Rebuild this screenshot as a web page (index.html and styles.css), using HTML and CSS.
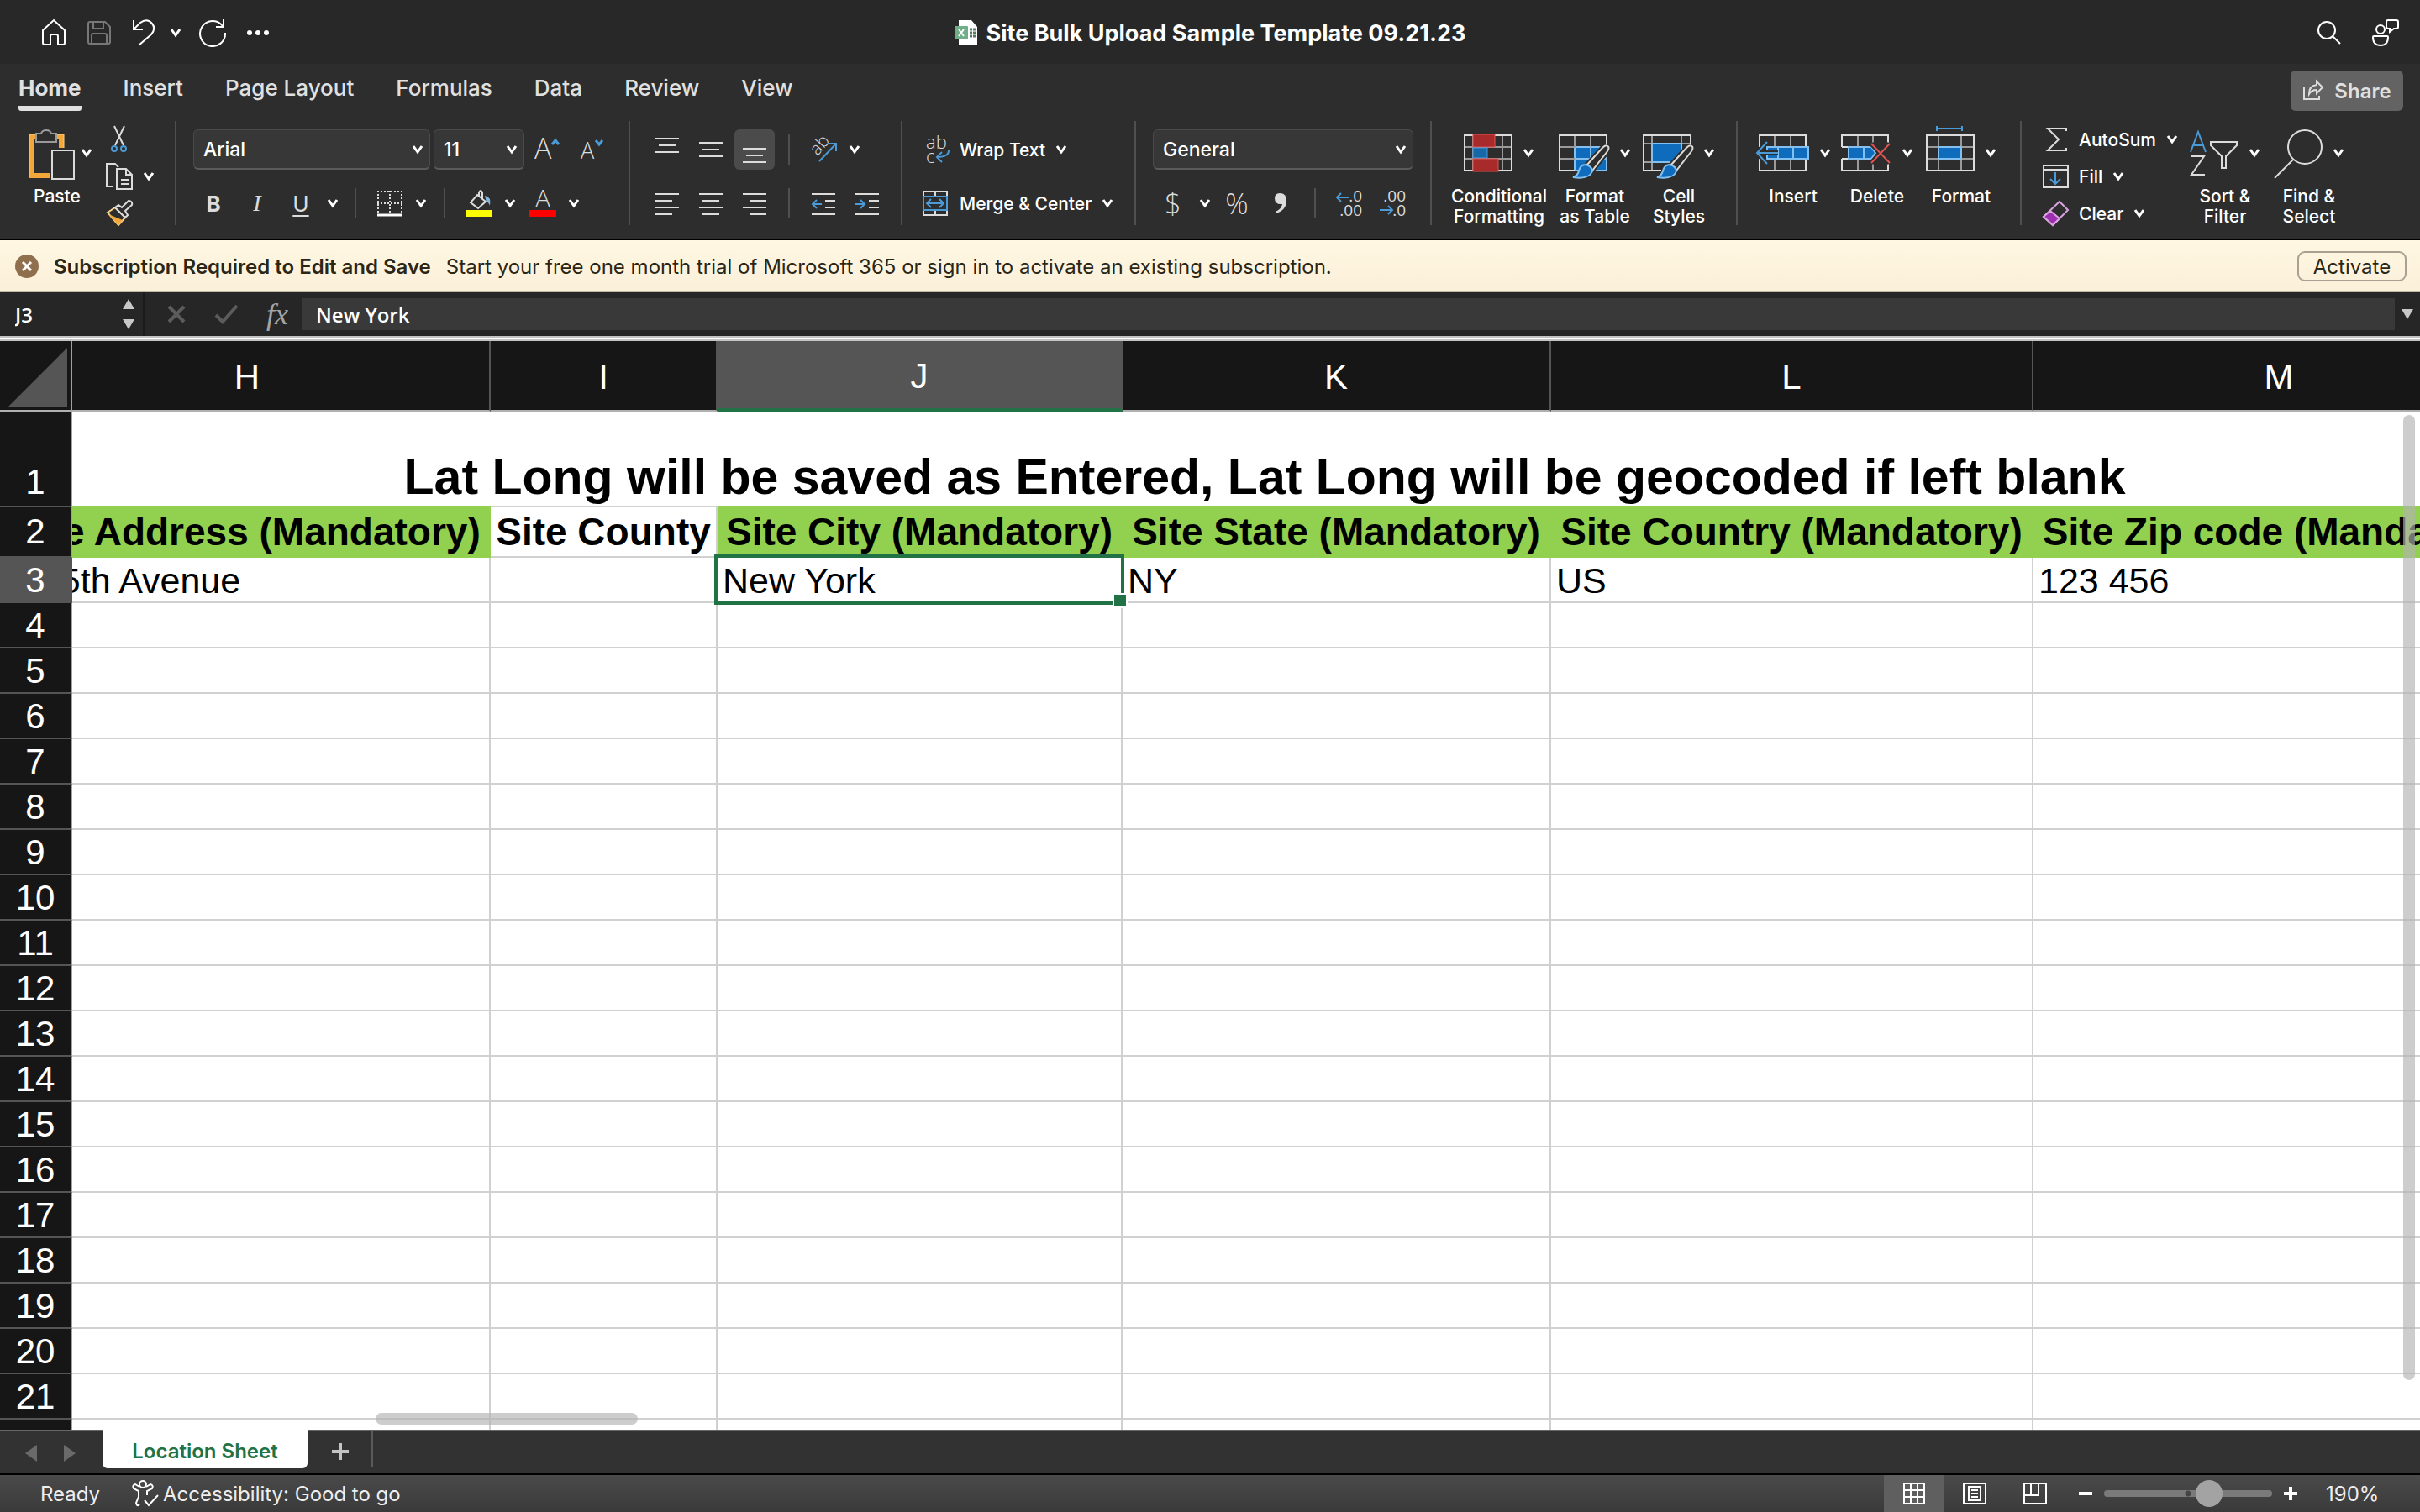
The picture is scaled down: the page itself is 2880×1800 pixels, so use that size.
FILE: index.html
```html
<!DOCTYPE html>
<html lang="en">
<head>
    <meta charset="UTF-8">
    <meta name="viewport" content="width=device-width, initial-scale=1.0">
    <title>Site Bulk Upload Sample Template 09.21.23</title>
    <link rel="stylesheet" href="styles.css">
</head>
<body>

    <!-- Shared symbols -->
    <svg class="symbols" aria-hidden="true">
        <symbol id="chevron" viewBox="0 0 14 12">
            <path d="M2 2 L7 9 L12 2" fill="none" stroke="#fff" stroke-width="3"/>
        </symbol>
        <symbol id="brush" viewBox="0 0 46 44">
            <path d="M43 3 Q46 4 43 9 L25 32 L18 26 L37 5 Q41 1 43 3 Z" fill="#2d2d2d" stroke="#2d2d2d" stroke-width="6"/>
            <path d="M43 3 Q46 4 43 9 L25 32 L18 26 L37 5 Q41 1 43 3 Z" fill="#2d2d2d" stroke="#dcdad6" stroke-width="2"/>
            <path d="M17 25 Q25 27 25 33 Q21 43 2 40 Q8 38 9 32 Q11 25 17 25 Z" fill="#0f6cbd" stroke="#83c0f0" stroke-width="2"/>
        </symbol>
    </svg>

    <!-- Title bar -->
    <header class="titlebar">
        <div class="quick">
            <button aria-label="Home"><svg width="32" height="32" viewBox="0 0 32 32"><path d="M3 13 L16 1 L29 13 V28 Q29 30 27 30 H21 V20 Q21 18 19 18 H14 Q12 18 12 20 V30 H5 Q3 30 3 28 Z"/></svg></button>
            <button aria-label="Save" class="dim"><svg width="32" height="32" viewBox="0 0 32 32"><path d="M5 3 H23 L29 9 V27 Q29 29 27 29 H5 Q3 29 3 27 V5 Q3 3 5 3 Z M9 3 V11 H21 V3 M7 29 V19 Q7 17 9 17 H23 Q25 17 25 19 V29"/></svg></button>
            <button aria-label="Undo"><svg width="32" height="32" viewBox="0 0 32 32"><path d="M3 1 V12 H14 M3 12 L11 4 Q19 -2 25 5 Q30 11 24 18 L9 31"/></svg></button>
            <button aria-label="Undo list" class="drop"><svg width="14" height="12"><use href="#chevron"/></svg></button>
            <button aria-label="Redo"><svg width="34" height="34" viewBox="0 0 34 34"><path d="M30 1 V10 H21 M29 9 A15 15 0 1 0 32 17"/></svg></button>
            <button aria-label="More"><svg width="32" height="32" viewBox="0 0 32 32"><g fill="#fff" stroke="none"><circle cx="5" cy="16" r="3"/><circle cx="15" cy="16" r="3"/><circle cx="25" cy="16" r="3"/></g></svg></button>
        </div>
        <h1>
            <svg width="28" height="30" viewBox="0 0 28 30"><path d="M5 0 H20 L27 8 V30 H5 Z" fill="#fff"/><path d="M18 11 H25 M18 15 H25 M18 19 H25" stroke="#5a7a66" stroke-width="3" stroke-dasharray="3 1"/><rect y="7" width="16" height="16" rx="1" fill="#6fae86"/><path d="M5 11 L11 19 M11 11 L5 19" stroke="#fff" stroke-width="2"/></svg>
            Site Bulk Upload Sample Template 09.21.23
        </h1>
        <div class="account">
            <button aria-label="Search"><svg width="32" height="32" viewBox="0 0 32 32"><circle cx="13" cy="13" r="10"/><path d="M20 20 L29 29"/></svg></button>
            <button aria-label="Collaborate"><svg width="34" height="34" viewBox="0 0 34 34"><circle cx="11" cy="13" r="5"/><path d="M2 22 Q2 21 3 21 H19 Q20 21 20 22 Q20 32 11 32 Q2 32 2 22 Z M20 2 H30 Q32 2 32 4 V10 Q32 12 30 12 H27 L22 16 V12 H20 Q18 12 18 10 V4 Q18 2 20 2 Z"/></svg></button>
        </div>
    </header>

    <!-- Ribbon tabs -->
    <nav class="tabs">
        <a href="#" class="active">Home</a>
        <a href="#">Insert</a>
        <a href="#">Page Layout</a>
        <a href="#">Formulas</a>
        <a href="#">Data</a>
        <a href="#">Review</a>
        <a href="#">View</a>
        <button class="share">
            <svg width="26" height="26" viewBox="0 0 26 26"><path d="M2 8 V23 H20 V19 M8 17 Q8 7 17 6 V2 L24 9 L17 16 V12 Q11 12 8 17 Z"/></svg>
            Share
        </button>
    </nav>

    <!-- Ribbon -->
    <section class="ribbon">
        <div class="group clipboard">
            <button class="big paste">
                <span class="pic">
                    <svg width="56" height="64" viewBox="0 0 56 64"><path d="M8 12 H3 V59 H25 M33 12 H39 V26" stroke="#f3a73b" stroke-width="6"/><path d="M1 61 V10 H10 M34 10 H42 V26" stroke="#fbd38b" stroke-width="1"/><path d="M9 19 V9 H15 Q16 5 21 5 Q26 5 27 9 H33 V19 Z" fill="#2d2d2d" stroke="#9a9a9a"/><rect x="28" y="29" width="26" height="34" fill="#2d2d2d" stroke="#dadada"/></svg>
                    <svg width="14" height="12"><use href="#chevron"/></svg>
                </span>
                Paste
            </button>
            <div class="stack">
                <button aria-label="Cut"><svg width="32" height="32" viewBox="0 0 32 32"><path d="M10 0 L21 23 M22 0 L11 23"/><g stroke="#4a9bd8"><circle cx="10" cy="27" r="3"/><circle cx="21" cy="27" r="3"/></g></svg></button>
                <button aria-label="Copy"><svg width="32" height="32" viewBox="0 0 32 32"><path d="M9 28 H1 V1 H11 L15 5 M13 7 H24 L31 14 V31 H13 Z M24 7 V14 H31 M18 20 H27 M18 25 H27"/></svg><svg width="14" height="12"><use href="#chevron"/></svg></button>
                <button aria-label="Format painter"><svg width="32" height="32" viewBox="0 0 32 32"><path d="M2 15 L11 9 L23 21 L15 30 Z" fill="#2d2d2d" stroke="#fbd38b"/><path d="M3 17 L20 24 L15 30 Z" fill="#f3a73b" stroke="none"/><path d="M11 9 L15 6 L19 9 L27 1 Q32 1 31 6 L23 13 L26 18 L23 21 Z" fill="#2d2d2d"/></svg></button>
            </div>
        </div>

        <div class="group font">
            <div class="row">
                <label class="select font-name"><select aria-label="Font"><option>Arial</option></select><svg width="14" height="12"><use href="#chevron"/></svg></label>
                <label class="select font-size"><select aria-label="Font size"><option>11</option></select><svg width="14" height="12"><use href="#chevron"/></svg></label>
                <button class="tool" aria-label="Increase font size"><svg width="34" height="32" viewBox="0 0 34 32"><text x="1" y="27" font-size="34">A</text><path d="M22 10 L26 5 L30 10" stroke="#4a9bd8" stroke-width="3"/></svg></button>
                <button class="tool" aria-label="Decrease font size"><svg width="30" height="32" viewBox="0 0 30 32"><text x="2" y="27" font-size="27">A</text><path d="M20 5 L24 10 L28 5" stroke="#4a9bd8" stroke-width="3"/></svg></button>
            </div>
            <div class="row">
                <button class="tool bold">B</button>
                <button class="tool italic">I</button>
                <button class="tool underline">U</button>
                <button class="drop" aria-label="Underline style"><svg width="14" height="12"><use href="#chevron"/></svg></button>
                <i class="sep"></i>
                <button class="tool-drop" aria-label="Borders"><svg width="32" height="32" viewBox="0 0 32 32"><path d="M1 2 H31 M1 16 H31 M2 1 V28 M16 1 V28 M30 1 V28" stroke-dasharray="2 2"/><path d="M1 30 H31" stroke="#fff" stroke-width="3"/></svg><svg width="14" height="12"><use href="#chevron"/></svg></button>
                <i class="sep"></i>
                <button class="tool-drop" aria-label="Fill color"><svg width="32" height="34" viewBox="0 0 32 34"><path d="M16 9 V4 Q18 0 20 4 V12 M14 7 L24 15 L15 23 L6 16 Z"/><path d="M23 8 Q31 9 29 20 Q27 15 25 16 Z" fill="#83b8e0" stroke="none"/><rect y="25" width="32" height="8" fill="#ff0" stroke="none"/></svg><svg width="14" height="12"><use href="#chevron"/></svg></button>
                <button class="tool-drop" aria-label="Font color"><svg width="32" height="34" viewBox="0 0 32 34"><text x="7" y="22" font-size="30">A</text><rect y="25" width="32" height="8" fill="#f00" stroke="none"/></svg><svg width="14" height="12"><use href="#chevron"/></svg></button>
            </div>
        </div>

        <div class="group align">
            <div class="row">
                <button class="tool" aria-label="Top align"><svg width="28" height="32" viewBox="0 0 28 32"><path d="M0 3 H28 M4 11 H24 M0 19 H28"/></svg></button>
                <button class="tool" aria-label="Middle align"><svg width="28" height="32" viewBox="0 0 28 32"><path d="M0 8 H28 M4 16 H24 M0 24 H28"/></svg></button>
                <button class="tool on" aria-label="Bottom align"><svg width="28" height="32" viewBox="0 0 28 32"><path d="M0 15 H28 M4 23 H24 M0 31 H28"/></svg></button>
                <i class="sep"></i>
                <button class="tool-drop" aria-label="Orientation"><svg width="32" height="32" viewBox="0 0 32 32"><text font-size="21" transform="translate(9 24) rotate(-50)">ab</text><path d="M11 30 L31 9 M21 9 H31 V18" stroke="#4a9bd8"/></svg><svg width="14" height="12"><use href="#chevron"/></svg></button>
            </div>
            <div class="row">
                <button class="tool" aria-label="Align left"><svg width="28" height="32" viewBox="0 0 28 32"><path d="M0 5 H28 M0 13 H20 M0 21 H28 M0 29 H20"/></svg></button>
                <button class="tool" aria-label="Center"><svg width="28" height="32" viewBox="0 0 28 32"><path d="M0 5 H28 M4 13 H24 M0 21 H28 M4 29 H24"/></svg></button>
                <button class="tool" aria-label="Align right"><svg width="28" height="32" viewBox="0 0 28 32"><path d="M0 5 H28 M8 13 H28 M0 21 H28 M8 29 H28"/></svg></button>
                <i class="sep"></i>
                <button class="narrow" aria-label="Decrease indent"><svg width="28" height="32" viewBox="0 0 28 32"><path d="M0 5 H28 M16 13 H28 M16 21 H28 M0 29 H28"/><path d="M12 17 H1 M6 12 L1 17 L6 22" stroke="#4a9bd8"/></svg></button>
                <button class="narrow" aria-label="Increase indent"><svg width="28" height="32" viewBox="0 0 28 32"><path d="M0 5 H28 M16 13 H28 M16 21 H28 M0 29 H28"/><path d="M0 17 H11 M6 12 L11 17 L6 22" stroke="#4a9bd8"/></svg></button>
            </div>
        </div>

        <div class="group wrap">
            <div class="row">
                <button class="labelled"><svg width="32" height="34" viewBox="0 0 32 34"><text x="4" y="16" font-size="22">ab</text><text x="4" y="33" font-size="22">c</text><path d="M31 17 Q32 26 17 26 M23 20 L17 26 L23 32" stroke="#4a9bd8"/></svg>Wrap Text<svg width="14" height="12"><use href="#chevron"/></svg></button>
            </div>
            <div class="row">
                <button class="labelled"><svg width="32" height="32" viewBox="0 0 32 32"><path d="M1 2 H29 V30 H1 Z M15 2 V8 M15 24 V30"/><path d="M1 8 H29 V24 H1 Z M5 16 H25 M10 11 L5 16 L10 21 M20 11 L25 16 L20 21" stroke="#4a9bd8"/></svg>Merge &amp; Center<svg width="14" height="12"><use href="#chevron"/></svg></button>
            </div>
        </div>

        <div class="group number">
            <div class="row">
                <label class="select number-format"><select aria-label="Number format"><option>General</option></select><svg width="14" height="12"><use href="#chevron"/></svg></label>
            </div>
            <div class="row">
                <button class="tool symbol">$</button>
                <button class="drop" aria-label="Currency list"><svg width="14" height="12"><use href="#chevron"/></svg></button>
                <button class="tool symbol">%</button>
                <button class="tool" aria-label="Comma style"><svg width="20" height="28" viewBox="0 0 20 28"><path d="M9 2 Q17 2 17 11 Q17 22 5 26 L4 24 Q11 21 12 15 Q3 16 3 8 Q3 2 9 2 Z" fill="#dcdcdc" stroke="none"/></svg></button>
                <i class="sep"></i>
                <button class="narrow decimals" aria-label="Increase decimal"><svg width="32" height="34" viewBox="0 0 32 34"><text x="31" y="15" font-size="19" text-anchor="end">.0</text><text x="31" y="32" font-size="19" text-anchor="end">.00</text><path d="M15 10 H1 M6 5 L1 10 L6 15" stroke="#4a9bd8"/></svg></button>
                <button class="narrow decimals" aria-label="Decrease decimal"><svg width="32" height="34" viewBox="0 0 32 34"><text x="31" y="15" font-size="19" text-anchor="end">.00</text><text x="31" y="32" font-size="19" text-anchor="end">.0</text><path d="M0 25 H15 M10 20 L15 25 L10 30" stroke="#4a9bd8"/></svg></button>
            </div>
        </div>

        <div class="group styles">
            <button class="big">
                <span class="pic">
                    <svg width="58" height="64" viewBox="0 0 58 64"><path d="M11 11 V53 M46 11 V53 M1 25 H57 M1 39 H57" stroke="#9a9a9a"/><rect x="1" y="11" width="56" height="42"/><g stroke-width="1"><rect x="11" y="10" width="26" height="15" fill="#a82a2a" stroke="#e05555"/><rect x="11" y="26" width="17" height="12" fill="#1668a8" stroke="#4a9bd8"/><rect x="11" y="39" width="30" height="15" fill="#a82a2a" stroke="#e05555"/></g></svg>
                    <svg width="14" height="12"><use href="#chevron"/></svg>
                </span>
                Conditional<br>Formatting
            </button>
            <button class="big">
                <span class="pic">
                    <svg width="60" height="64" viewBox="0 0 60 64"><path d="M19 25 H57 V53 H19 Z" fill="#0f6cbd" stroke="#83c0f0"/><path d="M1 25 H19 M1 39 H19 M19 11 V25 M38 11 V25" stroke="#9a9a9a"/><path d="M19 39 H57 M38 25 V53" stroke="#83c0f0"/><path d="M57 25 V11 H1 V53 H19"/><use href="#brush" x="15" y="21" width="46" height="44"/></svg>
                    <svg width="14" height="12"><use href="#chevron"/></svg>
                </span>
                Format<br>as Table
            </button>
            <button class="big">
                <span class="pic">
                    <svg width="60" height="64" viewBox="0 0 60 64"><path d="M11 11 V53 M46 11 V42 M1 21 H57 M1 43 H46" stroke="#9a9a9a"/><path d="M57 22 V11 H1 V53 H22"/><rect x="11" y="21" width="35" height="22" fill="#0f6cbd" stroke="#83c0f0"/><use href="#brush" x="15" y="21" width="46" height="44"/></svg>
                    <svg width="14" height="12"><use href="#chevron"/></svg>
                </span>
                Cell<br>Styles
            </button>
        </div>

        <div class="group cells">
            <button class="big">
                <span class="pic">
                    <svg width="64" height="64" viewBox="0 0 64 64"><path d="M23 11 V53 M42 11 V53" stroke="#9a9a9a"/><path d="M5 25 V11 H60 V25 M5 39 V53 H60 V39"/><rect x="14" y="25" width="49" height="14" fill="#0f6cbd" stroke="#83c0f0"/><path d="M27 25 V39 M45 25 V39" stroke="#83c0f0"/><path d="M27 32 H2 M14 19 L2 32 L14 45" stroke="#2d2d2d" stroke-width="6"/><path d="M27 32 H2 M14 19 L2 32 L14 45" stroke="#4a9bd8"/></svg>
                    <svg width="14" height="12"><use href="#chevron"/></svg>
                </span>
                Insert
            </button>
            <button class="big">
                <span class="pic">
                    <svg width="60" height="64" viewBox="0 0 60 64"><path d="M20 11 V25 M38 11 V25 M20 39 V53 M38 39 V53" stroke="#9a9a9a"/><path d="M1 25 V11 H56 V20 M1 25 H9 M1 39 H9 M1 39 V53 H56 V44"/><path d="M9 25 H36 L41 32 L36 39 H9 Z M27 25 V39" fill="#0f6cbd" stroke="#83c0f0"/><path d="M36 21 L58 44 M58 21 L36 44" stroke="#2d2d2d" stroke-width="6"/><path d="M36 21 L58 44 M58 21 L36 44" stroke="#e05252"/></svg>
                    <svg width="14" height="12"><use href="#chevron"/></svg>
                </span>
                Delete
            </button>
            <button class="big">
                <span class="pic">
                    <svg width="58" height="64" viewBox="0 0 58 64"><path d="M12 3 H44 M13 0 V6 M43 0 V6" stroke="#4a9bd8"/><path d="M15 11 V53 M42 11 V53 M1 25 H57 M1 39 H57" stroke="#9a9a9a"/><rect x="1" y="11" width="56" height="42"/><rect x="15" y="25" width="27" height="14" fill="#0f6cbd" stroke="#83c0f0"/></svg>
                    <svg width="14" height="12"><use href="#chevron"/></svg>
                </span>
                Format
            </button>
        </div>

        <div class="group editing">
            <div class="stack">
                <button><svg width="32" height="32" viewBox="0 0 32 32"><path d="M29 6 V3 H7 L20 16 L7 29 H29 V26"/></svg>AutoSum<svg width="14" height="12"><use href="#chevron"/></svg></button>
                <button><svg width="32" height="32" viewBox="0 0 32 32"><path d="M2 3 H31 V29 H2 Z M2 8 H31"/><path d="M16 11 V25 M10 19 L16 25 L22 19" stroke="#4a9bd8"/></svg>Fill<svg width="14" height="12"><use href="#chevron"/></svg></button>
                <button><svg width="32" height="32" viewBox="0 0 32 32"><path d="M21 2 L31 12 L13 30 L2 20 Z" stroke="#d9a3e0"/><path d="M10 13 L21 22 L13 30 L2 20 Z" fill="#9b2fae" stroke="#d9a3e0"/></svg>Clear<svg width="14" height="12"><use href="#chevron"/></svg></button>
            </div>
            <button class="big">
                <span class="pic">
                    <svg width="58" height="64" viewBox="0 0 58 64"><path d="M1 31 L10 7 L19 31 M4 23 H16" stroke="#4a9bd8"/><path d="M2 36 H17 L2 58 H18 M25 19 H56 V23 L43 36 V50 H38 V36 L25 23 Z"/></svg>
                    <svg width="14" height="12"><use href="#chevron"/></svg>
                </span>
                Sort &amp;<br>Filter
            </button>
            <button class="big">
                <span class="pic">
                    <svg width="58" height="64" viewBox="0 0 58 64"><circle cx="37" cy="25" r="20"/><path d="M23 40 L1 62"/></svg>
                    <svg width="14" height="12"><use href="#chevron"/></svg>
                </span>
                Find &amp;<br>Select
            </button>
        </div>
    </section>

    <!-- Subscription banner -->
    <section class="banner">
        <svg width="28" height="28" viewBox="0 0 28 28"><circle cx="14" cy="14" r="14" fill="#8f6f4d"/><path d="M9 9 L19 19 M19 9 L9 19" stroke="#fff" stroke-width="3"/></svg>
        <strong>Subscription Required to Edit and Save</strong>
        <span>Start your free one month trial of Microsoft 365 or sign in to activate an existing subscription.</span>
        <button>Activate</button>
    </section>

    <!-- Formula bar -->
    <section class="formula">
        <div class="namebox">
            <input type="text" value="J3" aria-label="Name box">
            <svg width="14" height="38" viewBox="0 0 14 38"><path d="M7 1 L14 13 H0 Z M0 25 H14 L7 37 Z" fill="#c8c8c8"/></svg>
        </div>
        <button aria-label="Cancel"><svg width="24" height="24" viewBox="0 0 24 24"><path d="M3 3 L21 21 M21 3 L3 21" stroke="#5c5c5c" stroke-width="4"/></svg></button>
        <button aria-label="Enter"><svg width="30" height="24" viewBox="0 0 30 24"><path d="M2 13 L10 21 L27 2" stroke="#5c5c5c" stroke-width="4"/></svg></button>
        <button class="fx">fx</button>
        <input type="text" class="entry" value="New York" aria-label="Formula">
        <button class="expand" aria-label="Expand formula bar"><svg width="14" height="12" viewBox="0 0 14 12"><path d="M0 0 H14 L7 12 Z" fill="#c8c8c8"/></svg></button>
    </section>

    <!-- Sheet -->
    <main class="sheet">
        <table>
            <colgroup>
                <col class="col-num"><col class="col-h"><col class="col-i"><col class="col-j"><col class="col-k"><col class="col-l"><col class="col-m">
            </colgroup>
            <thead>
                <tr>
                    <th class="corner"><svg width="70" height="70" viewBox="0 0 70 70"><path d="M70 0 V70 H0 Z" fill="#555"/></svg></th>
                    <th>H</th>
                    <th>I</th>
                    <th class="selected">J</th>
                    <th>K</th>
                    <th>L</th>
                    <th>M</th>
                </tr>
            </thead>
            <tbody id="rows">
                <tr class="note">
                    <th>1</th>
                    <td colspan="6">Lat Long will be saved as Entered, Lat Long will be geocoded if left blank</td>
                </tr>
                <tr class="fields">
                    <th>2</th>
                    <td class="mandatory">Site Address (Mandatory)</td>
                    <td>Site County</td>
                    <td class="mandatory">Site City (Mandatory)</td>
                    <td class="mandatory">Site State (Mandatory)</td>
                    <td class="mandatory">Site Country (Mandatory)</td>
                    <td class="mandatory">Site Zip code (Mandatory)</td>
                </tr>
                <tr>
                    <th class="selected">3</th>
                    <td>12 5th Avenue</td>
                    <td></td>
                    <td class="cursor">New York</td>
                    <td>NY</td>
                    <td>US</td>
                    <td>123 456</td>
                </tr>
                <!-- Empty rows are added below -->
            </tbody>
        </table>
        <div class="scroll-y"></div>
        <div class="scroll-x"></div>
    </main>

    <!-- Sheet tabs -->
    <footer class="sheet-tabs">
        <button aria-label="Previous sheet"><svg width="14" height="20" viewBox="0 0 14 20"><path d="M14 0 V20 L0 10 Z" fill="#6a6a6a"/></svg></button>
        <button aria-label="Next sheet"><svg width="14" height="20" viewBox="0 0 14 20"><path d="M0 0 V20 L14 10 Z" fill="#6a6a6a"/></svg></button>
        <a href="#" class="sheet-tab">Location Sheet</a>
        <button class="add" aria-label="New sheet"><svg width="20" height="20" viewBox="0 0 20 20"><path d="M10 0 V20 M0 10 H20" stroke="#c4c4c4" stroke-width="4"/></svg></button>
    </footer>

    <!-- Status bar -->
    <footer class="status">
        <span class="ready">Ready</span>
        <button class="access">
            <svg width="34" height="32" viewBox="0 0 34 32"><circle cx="14" cy="5" r="4"/><path d="M10 8 L5 5 Q1 6 3 10 L9 13 V20 L6 27 Q7 32 10 29 M18 8 L23 5 Q27 6 25 10 L19 13 V18 M16 24 L21 30 L32 18"/></svg>
            Accessibility: Good to go
        </button>
        <div class="views">
            <button class="on" aria-label="Normal view"><svg width="28" height="28" viewBox="0 0 28 28"><path d="M2 2 H26 V26 H2 Z M10 2 V26 M18 2 V26 M2 10 H26 M2 18 H26"/></svg></button>
            <button aria-label="Page layout view"><svg width="28" height="28" viewBox="0 0 28 28"><path d="M1 2 H27 V26 H1 Z M7 6 H21 V22 H7 Z M10 10 H18 M10 14 H18 M10 18 H18"/></svg></button>
            <button aria-label="Page break view"><svg width="28" height="28" viewBox="0 0 28 28"><path d="M1 2 H27 V26 H1 Z M1 16 H18 V2 M9 2 V16"/></svg></button>
        </div>
        <div class="zoom">
            <button aria-label="Zoom out"><svg width="16" height="16" viewBox="0 0 16 16"><path d="M0 8 H16" stroke-width="4"/></svg></button>
            <input type="range" min="0" max="100" value="65" aria-label="Zoom">
            <button aria-label="Zoom in"><svg width="16" height="16" viewBox="0 0 16 16"><path d="M0 8 H16 M8 0 V16" stroke-width="4"/></svg></button>
            <span>190%</span>
        </div>
    </footer>

    <script>
        const rows = document.getElementById("rows");

        // Fill the rest of the sheet with empty rows
        for (let n = 4; n <= 22; n++) {
            const row = document.createElement("tr");
            row.innerHTML = `<th>${n}</th>` + "<td></td>".repeat(6);
            rows.appendChild(row);
        }
    </script>
</body>
</html>
```
FILE: styles.css
```css
* {
    box-sizing: border-box;
}

body {
    display: flex;
    flex-direction: column;
    height: 100vh;
    margin: 0;
    overflow: hidden;
    background: #2d2d2d;
    color: #fff;
    font-family: Inter, "Liberation Sans", sans-serif;
    font-size: 21px;
}

button {
    display: flex;
    align-items: center;
    justify-content: center;
    padding: 0;
    border: none;
    background: none;
    color: inherit;
    font: inherit;
    white-space: nowrap;
    cursor: pointer;
}

a {
    color: inherit;
    text-decoration: none;
}

svg {
    flex: none;
    overflow: visible;
    fill: none;
    stroke: #dcdcdc;
    stroke-width: 2;
}

svg text {
    fill: #dcdcdc;
    stroke: none;
    font-family: "Open Sans", sans-serif;
    font-weight: 300;
}

svg path[fill="#fff"],
svg path[fill="#c8c8c8"],
svg path[fill="#6a6a6a"],
svg path[fill="#555"],
svg circle[fill="#8f6f4d"],
svg rect[fill="#6fae86"] {
    stroke: none;
}

.symbols {
    display: none;
}

/* Title bar */
.titlebar {
    display: grid;
    grid-template-columns: 1fr auto 1fr;
    align-items: center;
    height: 76px;
    padding: 2px 24px 0;
    background: #282828;
}

.titlebar svg {
    stroke: #fff;
}

.titlebar h1 {
    display: flex;
    align-items: center;
    gap: 10px;
    margin: 0;
    font-size: 27px;
    font-weight: 700;
}

.quick {
    display: flex;
    align-items: center;
    gap: 22px;
    padding-left: 24px;
}

.quick .dim svg {
    stroke: #777;
}

.quick .drop {
    width: 14px;
    margin: 0 -2px 0 -8px;
}

.account {
    display: flex;
    justify-content: flex-end;
    gap: 34px;
}

/* Ribbon tabs */
.tabs {
    display: flex;
    align-items: flex-start;
    gap: 50px;
    height: 68px;
    padding: 8px 20px 0 22px;
    color: #e0e0e0;
    font-size: 26px;
    font-weight: 500;
}

.tabs a {
    height: 48px;
    line-height: 42px;
}

.tabs .active {
    border-bottom: 6px solid #e0e0e0;
    border-radius: 3px;
    font-weight: 700;
}

.share {
    gap: 12px;
    width: 134px;
    height: 48px;
    margin-left: auto;
    border-radius: 6px;
    background: #636363;
    font-size: 24px;
    font-weight: 600;
}

/* Ribbon */
.ribbon {
    display: flex;
    height: 142px;
    border-bottom: 2px solid #000;
    font-weight: 500;
}

.group {
    height: 124px;
    padding: 10px 20px 0;
    border-right: 2px solid #4f4f4f;
}

.row {
    display: flex;
    align-items: center;
    gap: 4px;
    height: 48px;
    margin-bottom: 16px;
}

.clipboard {
    width: 210px;
}

.font {
    width: 540px;
}

.align {
    width: 324px;
}

.wrap {
    width: 278px;
    padding-left: 24px;
}

.number {
    width: 352px;
}

.styles {
    width: 364px;
}

.cells {
    width: 338px;
}

.editing {
    flex: 1;
    border-right: none;
}

.clipboard,
.styles,
.cells,
.editing {
    display: flex;
    gap: 16px;
    padding: 6px 24px 0;
}

.clipboard {
    padding-left: 34px;
}

.big {
    flex-direction: column;
    justify-content: flex-start;
    width: 84px;
    line-height: 24px;
}

.styles .big:first-child {
    width: 112px;
}

.pic {
    display: flex;
    align-items: center;
    gap: 12px;
    height: 64px;
    margin-bottom: 8px;
}

.paste {
    align-items: flex-start;
    width: 76px;
    text-indent: 6px;
}

.paste .pic {
    gap: 6px;
}

.stack {
    display: grid;
    grid-template-rows: repeat(3, 28px);
    gap: 16px;
    width: 160px;
    padding-top: 2px;
}

.clipboard .stack {
    width: 60px;
}

.stack button {
    justify-content: flex-start;
    gap: 12px;
}

.tool {
    width: 48px;
    height: 48px;
    border-radius: 6px;
}

.tool.on {
    background: #4b4b4b;
}

.bold,
.italic,
.underline {
    color: #dcdcdc;
    font-size: 26px;
}

.bold {
    font-weight: 700;
}

.italic {
    font-family: "Liberation Serif", serif;
    font-size: 28px;
    font-style: italic;
}

.underline {
    font-weight: 400;
    text-decoration: underline;
    text-underline-offset: 4px;
}

.symbol {
    color: #dcdcdc;
    font-family: "Open Sans", sans-serif;
    font-size: 34px;
    font-weight: 300;
}

.decimals text {
    font-weight: 400;
}

.drop {
    width: 20px;
}

.sep {
    width: 2px;
    height: 36px;
    margin: 0 20px 0 12px;
    background: #4f4f4f;
}

.tool-drop {
    gap: 14px;
    padding-right: 4px;
}

.tool-drop + .tool-drop {
    margin-left: 8px;
}

.narrow {
    width: 32px;
}

.narrow + .narrow {
    margin-left: 16px;
}

.labelled {
    gap: 12px;
}

.select {
    display: grid;
    align-items: center;
    height: 48px;
}

.select select,
.select svg {
    grid-area: 1 / 1;
}

.select svg {
    justify-self: end;
    margin-right: 8px;
    pointer-events: none;
}

.select select {
    height: 48px;
    padding: 0 11px;
    border: 1px solid #4a4a4a;
    border-bottom: 2px solid #5a5a5a;
    border-radius: 6px;
    background: #373737;
    color: #fff;
    font: inherit;
    font-size: 23px;
    appearance: none;
}

.font-name {
    width: 282px;
}

.font-size {
    width: 108px;
}

.number-format {
    width: 310px;
}

/* Subscription banner */
.banner {
    display: flex;
    align-items: center;
    gap: 18px;
    height: 62px;
    padding: 2px 16px 0 18px;
    border-bottom: 2px solid #bdb7a5;
    background: linear-gradient(#fff7e2, #fbf0da);
    color: #2b2615;
    font-size: 24px;
}

.banner strong {
    font-weight: 600;
}

.banner button {
    width: 130px;
    height: 36px;
    margin-left: auto;
    border: 2px solid #a8a192;
    border-radius: 9px;
}

/* Formula bar */
.formula {
    display: flex;
    align-items: center;
    height: 52px;
    background: #262626;
}

.formula input {
    border: none;
    outline: none;
    color: #fff;
    font-family: "Open Sans", sans-serif;
    font-size: 24px;
    font-weight: 600;
}

.formula button {
    width: 60px;
}

.namebox {
    display: flex;
    align-items: center;
    width: 172px;
    height: 52px;
    margin-right: 8px;
    padding: 0 10px 0 18px;
    border-right: 2px solid #1b1b1b;
}

.namebox input {
    flex: 1;
    width: 0;
    padding: 0;
    background: none;
}

.formula .fx {
    color: #a4a4a4;
    font-family: "Liberation Serif", serif;
    font-size: 36px;
    font-style: italic;
}

.entry {
    flex: 1;
    height: 38px;
    padding: 0 16px;
    background: #393939;
}

.formula .expand {
    width: 30px;
}

/* Sheet */
.sheet {
    position: relative;
    flex: 1;
    min-height: 0;
    overflow: hidden;
    border-top: 6px double #c4c4c4;
    background: #fff;
    color: #000;
    font-family: "Liberation Sans", Arial, sans-serif;
    font-size: 42px;
}

/* Scrolled so that the first part of column H is out of view */
.sheet table {
    width: 3086px;
    margin-left: -80px;
    border-spacing: 0;
    table-layout: fixed;
}

.col-num { width: 86px; }
.col-h { width: 578px; }
.col-i { width: 270px; }
.col-j { width: 482px; }
.col-k { width: 510px; }
.col-l { width: 574px; }
.col-m { width: 586px; }

.sheet th {
    padding: 2px 0 0;
    border-right: 2px solid #555;
    border-bottom: 2px solid #555;
    background: #161616;
    color: #fff;
    font-weight: 400;
}

.sheet thead th {
    height: 84px;
    padding-top: 4px;
    border-bottom-color: #b0b0b0;
}

.sheet th:first-child {
    position: sticky;
    left: 0;
    z-index: 1;
    border-right-color: #a0a0a0;
}

.sheet .corner svg {
    display: block;
    margin: 4px 0 4px 10px;
}

.sheet thead .selected {
    border-bottom: 4px solid #217346;
    border-right-color: #555;
    background: #555;
}

.sheet tbody .selected {
    border-right-color: #217346;
    background: #555;
}

.sheet td {
    height: 54px;
    padding: 2px 6px 0;
    border-right: 2px solid #d0d0d0;
    border-bottom: 2px solid #d0d0d0;
    font-size: 43px;
    line-height: 50px;
    white-space: nowrap;
    overflow: hidden;
}

.sheet .note th,
.sheet .note td {
    height: 114px;
    vertical-align: bottom;
}

.sheet .note th {
    padding-bottom: 4px;
}

.sheet .note td {
    font-size: 59px;
    font-weight: 700;
    line-height: 68px;
    text-align: center;
}

.sheet .fields td {
    height: 60px;
    padding: 0;
    font-size: 46px;
    font-weight: 700;
    text-align: center;
}

.sheet .fields th {
    padding-top: 0;
}

.sheet .mandatory {
    border-color: #92d050;
    background: #92d050;
    box-shadow: 0 -2px 0 #92d050;
}

.sheet .cursor {
    position: relative;
    overflow: visible;
}

.cursor::before {
    content: "";
    position: absolute;
    inset: -4px;
    border: 4px solid #217346;
}

.cursor::after {
    content: "";
    position: absolute;
    right: -8px;
    bottom: -8px;
    width: 14px;
    height: 14px;
    border: 2px solid #fff;
    background: #217346;
}

.scroll-y,
.scroll-x {
    position: absolute;
    z-index: 2;
    border-radius: 7px;
    background: rgba(178, 178, 178, 0.65);
}

.scroll-y {
    top: 88px;
    right: 6px;
    bottom: 59px;
    width: 14px;
}

.scroll-x {
    bottom: 6px;
    left: 447px;
    width: 312px;
    height: 14px;
}

/* Sheet tabs */
.sheet-tabs {
    display: flex;
    align-items: center;
    height: 52px;
    padding-left: 14px;
    border-top: 2px solid #666;
    background: #323232;
}

.sheet-tabs button {
    width: 46px;
    padding-top: 2px;
}

.sheet-tab {
    align-self: flex-start;
    width: 244px;
    height: 46px;
    margin: -2px 0 0 16px;
    border-radius: 0 0 6px 6px;
    background: #fff;
    color: #217346;
    font-size: 24px;
    font-weight: 600;
    line-height: 52px;
    text-align: center;
}

.sheet-tabs .add {
    align-self: flex-start;
    width: 78px;
    height: 42px;
    padding: 6px 0 0 2px;
    border-right: 2px solid #5a5a5a;
}

/* Status bar */
.status {
    display: flex;
    align-items: center;
    height: 46px;
    border-top: 2px solid #000;
    background: linear-gradient(#4a4a4a, #3a3a3a);
    color: #eee;
    font-size: 24px;
}

.status svg {
    stroke: #fff;
}

.ready {
    width: 156px;
    padding-left: 48px;
}

.access {
    gap: 4px;
}

.views {
    display: flex;
    margin-left: auto;
}

.views button {
    width: 72px;
    height: 44px;
}

.views .on {
    background: #5f5f5f;
}

.zoom {
    display: flex;
    align-items: center;
    gap: 14px;
    padding-left: 16px;
}

.zoom span {
    width: 132px;
    padding-left: 20px;
}

.zoom input {
    width: 200px;
    height: 32px;
    margin: 0;
    background: none;
    appearance: none;
}

.zoom input::-webkit-slider-runnable-track {
    height: 8px;
    border-radius: 4px;
    background: radial-gradient(circle, #444 3px, #7a7a7a 4px);
}

.zoom input::-webkit-slider-thumb {
    width: 32px;
    height: 32px;
    margin-top: -12px;
    border-radius: 50%;
    background: #a3a3a3;
    appearance: none;
}
```
